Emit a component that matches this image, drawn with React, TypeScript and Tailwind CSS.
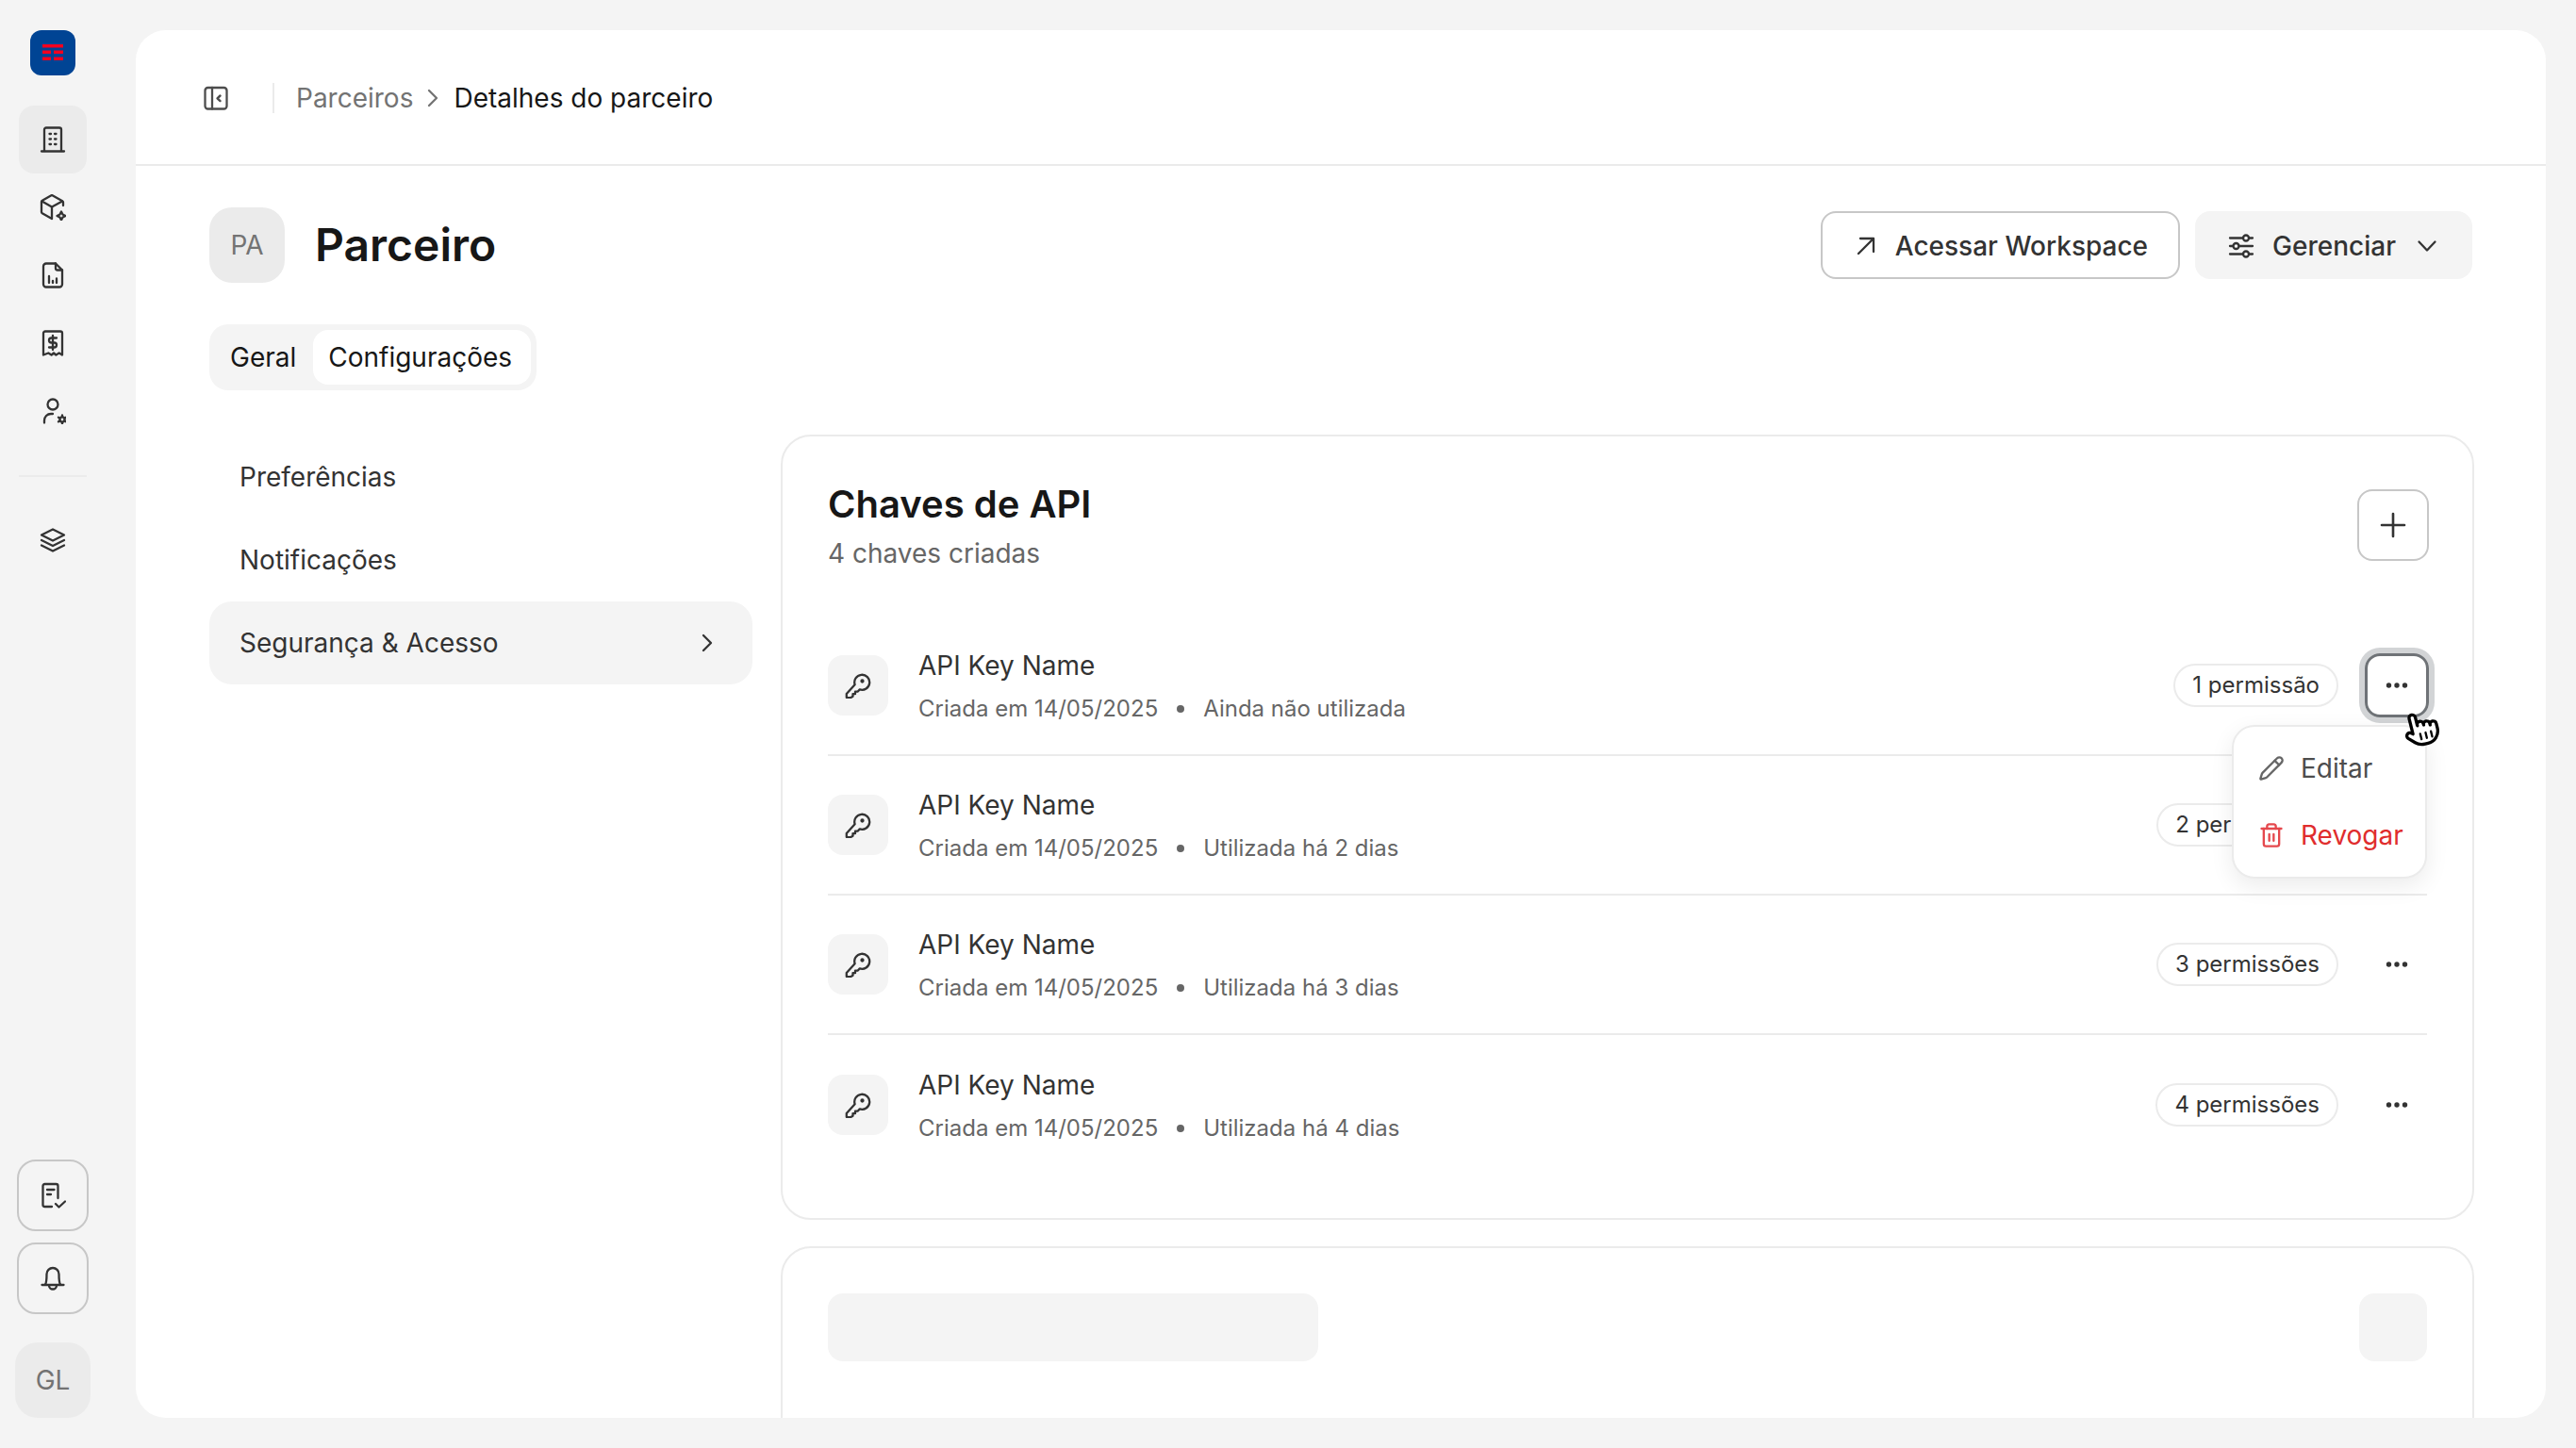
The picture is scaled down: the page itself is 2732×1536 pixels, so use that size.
import { Pencil, Trash2 } from "lucide-react";
import type { ReactNode } from "react";

function Icon({ size = 28, className = "", children }: { size?: number; className?: string; children: ReactNode }) {
	return (
		<svg
			width={size}
			height={size}
			viewBox="0 0 28 28"
			fill="none"
			stroke="currentColor"
			strokeWidth="2.300"
			strokeLinecap="round"
			strokeLinejoin="round"
			className={"shrink-0 " + className}
		>
			{children}
		</svg>
	);
}

const BuildingIcon = () => (
	<Icon>
		<path d="M2 26.500h24" />
		<path d="M5 26V3.500A2 2 0 0 1 7 1.500h14a2 2 0 0 1 2 2V26" />
		<path d="M10.500 8h1.500M16 8h1.500M10.500 13.500h1.500M16 13.500h1.500M10.500 19h1.500M16 19h1.500" />
	</Icon>
);
const CubeIcon = () => (
	<Icon>
		<path d="M25 12V8.500a1.500 1.500 0 0 0-.8-1.300L14 1.400a2 2 0 0 0-2 0L2.800 6.800a1.500 1.500 0 0 0-.8 1.300v10.800a1.500 1.500 0 0 0 .8 1.300L13 26" />
		<path d="M2.500 7.500 13 13.500l11-6" />
		<path d="M13 13.500V25.500" />
		<path d="m23 18.500 1.500 3 3 1.500-3 1.500-1.500 3-1.500-3-3-1.500 3-1.500z" />
	</Icon>
);
const FileChartIcon = () => (
	<Icon>
		<path d="M7 1.500h10l7 7V23.500a3 3 0 0 1-3 3H7a3 3 0 0 1-3-3v-19a3 3 0 0 1 3-3z" />
		<path d="M17 1.500v5a2 2 0 0 0 2 2h5" />
		<path d="M10 15v7M14 20v2M18 17.500V22" />
	</Icon>
);
const ReceiptIcon = () => (
	<Icon>
		<path d="M4 26.500V3.500a2 2 0 0 1 2-2h16a2 2 0 0 1 2 2v23l-3.300-2-3.300 2-2.400-2-2.400 2-3.300-2z" />
		<path d="M18 8.500h-5.500a2.500 2.500 0 0 0 0 5h3a2.500 2.500 0 0 1 0 5H10" />
		<path d="M14 6v15" />
	</Icon>
);
const UserGearIcon = () => (
	<Icon>
		<circle cx="14" cy="7" r="5.500" />
		<path d="M5 26.500V24a7 7 0 0 1 7-7h2" />
		<circle cx="24" cy="23" r="2.600" />
		<path d="M24 18.400v2M24 25.600v2M20 20.700l1.700 1M26.300 24.300l1.700 1M20 25.300l1.700-1M26.300 21.700l1.700-1" />
	</Icon>
);
const LayersIcon = () => (
	<Icon>
		<path d="M14 2.500 26 8.500 14 14.500 2 8.500z" />
		<path d="m2 14 12 6 12-6" />
		<path d="m2 19.500 12 6 12-6" />
	</Icon>
);
const PanelIcon = () => (
	<Icon>
		<rect x="2.500" y="3" width="23" height="22.500" rx="3" />
		<path d="M10 3v22.500" />
		<path d="m18.500 11.500-3 2.800 3 2.800" strokeWidth="2.400" />
	</Icon>
);
const FileCheckIcon = () => (
	<Icon>
		<path d="M13 26H5.500a2 2 0 0 1-2-2V4a2 2 0 0 1 2-2h12a2 2 0 0 1 2 2v13" />
		<path d="M8 8h7.500M8 13h4" />
		<path d="m17 23 3.500 3.500L27 20.500" />
	</Icon>
);
const BellIcon = () => (
	<Icon>
		<path d="M6 20.500c1.500-2 1.500-5 1.500-11a6.500 6.500 0 0 1 13 0c0 6 0 9 1.500 11" />
		<path d="M2.500 21h23" />
		<path d="M10 21.500a4 4 0 0 0 8 0" />
	</Icon>
);
const KeyIcon = () => (
	<Icon className="text-[#333333]">
		<path d="M10.600 13.200a8 8 0 1 1 5.200 5.200l-2.300 2.300H11v2.500H8.500v2.500L6 27.200H2.500a.7.7 0 0 1-.7-.7V23z" />
		<circle cx="18.500" cy="9.500" r="1" fill="currentColor" />
	</Icon>
);
const ArrowIcon = () => (
	<Icon>
		<path d="M6 22 21.500 6.500" />
		<path d="M8 6h14v14" />
	</Icon>
);
const SlidersIcon = () => (
	<Icon>
		<path d="M2 5.500h14M22.500 5.500H26M2 14h3M11.500 14H26M2 22.500h14M22.500 22.500H26" />
		<circle cx="19" cy="5.500" r="3" />
		<circle cx="8.500" cy="14" r="3" />
		<circle cx="19" cy="22.500" r="3" />
	</Icon>
);
const ChevronDownIcon = () => (
	<Icon>
		<path d="m5.500 9.500 8.500 9 8.500-9" />
	</Icon>
);
const ChevronRightIcon = () => (
	<Icon>
		<path d="m10 6 8 8-8 8" />
	</Icon>
);
const PlusIcon = () => (
	<Icon size={32}>
		<path d="M14 3.500v21M3.500 14h21" />
	</Icon>
);
const DotsIcon = () => (
	<svg width="28" height="28" viewBox="0 0 28 28" fill="currentColor" className="shrink-0">
		<circle cx="5.500" cy="14" r="2.700" />
		<circle cx="14" cy="14" r="2.700" />
		<circle cx="22.500" cy="14" r="2.700" />
	</svg>
);

function Logo() {
	return (
		<div className="flex h-12 w-12 items-center justify-center rounded-xl bg-[#004494]">
			<svg width="24" height="18" viewBox="0 0 24 18" fill="#f5001e">
				<rect x="1" y="0" width="22" height="3.500" />
				<rect x="1" y="6.500" width="9" height="3.500" />
				<rect x="13" y="6.500" width="10" height="3.500" />
				<rect x="1" y="13.500" width="9" height="3.500" />
				<rect x="13" y="13.500" width="10" height="3.500" />
			</svg>
		</div>
	);
}

function Sidebar() {
	const items = [BuildingIcon, CubeIcon, FileChartIcon, ReceiptIcon, UserGearIcon];
	return (
		<aside className="flex h-full w-[144px] shrink-0 flex-col items-center pt-8 pr-8 pb-8 text-[#333333]">
			<Logo />
			<nav className="mt-8 flex flex-col">
				{items.map((Item, i) => (
					<div
						key={i}
						className={"flex h-[72px] w-[72px] items-center justify-center rounded-2xl " + (i === 0 ? "bg-[#ebebeb]" : "")}
					>
						<Item />
					</div>
				))}
			</nav>
			<div className="mt-8 h-0.5 w-[72px] bg-[#ebebeb]" />
			<div className="mt-[31px] flex h-[72px] w-[72px] items-center justify-center">
				<LayersIcon />
			</div>
			<div className="mt-auto flex flex-col gap-3">
				<button className="flex h-[76px] w-[76px] items-center justify-center rounded-[20px] border-2 border-[#c7c7c7]">
					<FileCheckIcon />
				</button>
				<button className="flex h-[76px] w-[76px] items-center justify-center rounded-[20px] border-2 border-[#c7c7c7]">
					<BellIcon />
				</button>
			</div>
			<div className="mt-[30px] flex h-20 w-20 items-center justify-center rounded-3xl bg-[#ebebeb] text-[28px] text-[#737373]">
				GL
			</div>
		</aside>
	);
}

function Hand() {
	return (
		<svg width="40" height="40" viewBox="0 0 24 24" className="absolute top-[60px] left-[40px] z-20 rotate-[-14deg]">
			<path
				d="M6 14V4a2 2 0 0 1 4 0v5.500a2 2 0 0 1 4-.5v1a2 2 0 0 1 4 0v1a2 2 0 1 1 4 0v3a8 8 0 0 1-8 8h-2c-2.800 0-4.500-.860-6-2.340l-3.600-3.600a2 2 0 0 1 2.830-2.820L6 14z"
				fill="#ffffff"
				stroke="#000000"
				strokeWidth="2"
				strokeLinejoin="round"
			/>
			<path d="M10.500 15v3.500M14 15v3.500M17.500 15v3.500" stroke="#000000" strokeWidth="1.400" strokeLinecap="round" />
		</svg>
	);
}

function Menu() {
	return (
		<div className="absolute top-[76px] right-[2px] z-10 flex h-[163px] w-[207px] flex-col rounded-3xl border-2 border-[#ebebeb] bg-white py-2 pr-6 pl-[26px] text-[28px] shadow-[0_8px_24px_rgba(0,0,0,0.08)]">
			<div className="flex h-[72px] items-center gap-[17px] text-[#4d4d4d]">
				<Pencil size={28} strokeWidth={2} className="shrink-0 text-[#666666]" />
				<span>Editar</span>
			</div>
			<div className="flex h-[72px] items-center gap-[17px] text-[#e02d2d]">
				<Trash2 size={28} strokeWidth={2} className="shrink-0 text-[#e5484d]" />
				<span>Revogar</span>
			</div>
		</div>
	);
}

function KeyRow({ perms, used, open, last }: { perms: string; used: string; open?: boolean; last?: boolean }) {
	return (
		<div className={"flex h-[148px] items-center " + (last ? "" : "border-b-2 border-[#ebebeb]")}>
			<div className="flex h-16 w-16 shrink-0 items-center justify-center rounded-2xl bg-[#f4f4f4]">
				<KeyIcon />
			</div>
			<div className="ml-8 flex flex-col pt-[3px]">
				<div className="text-[28px] leading-[40px] font-normal text-[#333333]">API Key Name</div>
				<div className="mt-[6px] flex items-center text-[24px] leading-[40px] text-[#666666]">
					<span>Criada em 14/05/2025</span>
					<span className="mx-5 h-2 w-2 rounded-full bg-[#666666]" />
					<span>{used}</span>
				</div>
			</div>
			<div className="ml-auto flex h-[46px] items-center rounded-full border-2 border-[#ebebeb] px-[18px] text-[24px] font-normal text-[#333333]">
				{perms}
			</div>
			<div className="relative mr-[-2px] ml-[28px]">
				<button
					className={
						"flex h-[68px] w-[68px] items-center justify-center rounded-2xl text-[#333333] " +
						(open ? "border-[3px] border-[#6f7377] shadow-[0_0_0_6px_#d2d4d6]" : "")
					}
				>
					<DotsIcon />
				</button>
				{open && <Menu />}
				{open && <Hand />}
			</div>
		</div>
	);
}

export default function App() {
	return (
		<div className="flex h-[1536px] w-[2732px] overflow-hidden bg-[#f4f4f4] font-['Inter',sans-serif]">
			<Sidebar />
			<main className="my-8 mr-8 flex-1 overflow-hidden rounded-[32px] bg-white">
				<header className="flex h-[144px] items-center border-b-2 border-[#ebebeb] pt-0.5 pl-[71px] text-[28px]">
					<span className="text-[#4d4d4d]">
						<PanelIcon />
					</span>
					<div className="ml-[46px] h-8 w-0.5 bg-[#ebebeb]" />
					<span className="ml-[23px] text-[#737373]">Parceiros</span>
					<span className="mr-2 ml-[7px] text-[#737373]">
						<ChevronRightIcon />
					</span>
					<span className="text-[#171717]">Detalhes do parceiro</span>
				</header>

				<div className="pt-11 pr-[76px] pl-[78px]">
					<div className="flex items-center">
						<div className="flex h-20 w-20 items-center justify-center rounded-3xl bg-[#ebebeb] text-[28px] text-[#737373]">
							PA
						</div>
						<h1 className="ml-8 text-[48px] leading-none font-semibold text-[#171717]">Parceiro</h1>
						<div className="mr-0.5 ml-auto flex gap-4 text-[28px] font-medium text-[#333333]">
							<button className="flex h-[72px] items-center gap-[17px] rounded-2xl border-2 border-[#c7c7c7] pt-0.5 pr-[32px] pl-[32px]">
								<ArrowIcon />
								Acessar Workspace
							</button>
							<button className="flex h-[72px] items-center gap-[19px] rounded-2xl bg-[#f4f4f4] pt-0.5 pr-[34px] pl-[35px]">
								<SlidersIcon />
								Gerenciar
								<ChevronDownIcon />
							</button>
						</div>
					</div>

					<div className="mt-11 flex h-[70px] w-fit items-center gap-0.5 rounded-[20px] bg-[#f4f4f4] p-1.5 text-[28px] font-normal text-[#171717]">
						<div className="flex h-[58px] items-center px-4">Geral</div>
						<div className="flex h-[58px] items-center rounded-2xl bg-white pr-5 pl-4">Configurações</div>
					</div>

					<div className="mt-[47px] flex gap-[30px]">
						<nav className="w-[576px] shrink-0 pt-px text-[28px] font-normal text-[#333333]">
							<div className="flex h-[88px] items-center px-8">Preferências</div>
							<div className="flex h-[88px] items-center px-8">Notificações</div>
							<div className="flex h-[88px] items-center justify-between rounded-3xl bg-[#f4f4f4] pr-[34px] pl-8">
								Segurança &amp; Acesso
								<ChevronRightIcon />
							</div>
						</nav>

						<div className="min-w-0 flex-1">
							<section className="rounded-[32px] border-2 border-[#ebebeb] px-12 pt-11 pb-[46px]">
								<div className="flex items-center justify-between">
									<div>
										<h2 className="text-[40px] leading-[56px] font-semibold text-[#171717]">Chaves de API</h2>
										<p className="mt-1 text-[28px] leading-[40px] font-normal text-[#666666]">4 chaves criadas</p>
									</div>
									<button className="mr-[-2px] flex h-[76px] w-[76px] items-center justify-center rounded-2xl border-2 border-[#c7c7c7] text-[#333333]">
										<PlusIcon />
									</button>
								</div>
								<div className="mt-[47px]">
									<KeyRow perms="1 permissão" used="Ainda não utilizada" open />
									<KeyRow perms="2 permissões" used="Utilizada há 2 dias" />
									<KeyRow perms="3 permissões" used="Utilizada há 3 dias" />
									<KeyRow perms="4 permissões" used="Utilizada há 4 dias" last />
								</div>
							</section>

							<section className="mt-7 flex h-[300px] items-start justify-between rounded-[32px] border-2 border-[#ebebeb] p-12">
								<div className="h-[72px] w-[520px] rounded-2xl bg-[#f4f4f4]" />
								<div className="h-[72px] w-[72px] rounded-2xl bg-[#f4f4f4]" />
							</section>
						</div>
					</div>
				</div>
			</main>
		</div>
	);
}
